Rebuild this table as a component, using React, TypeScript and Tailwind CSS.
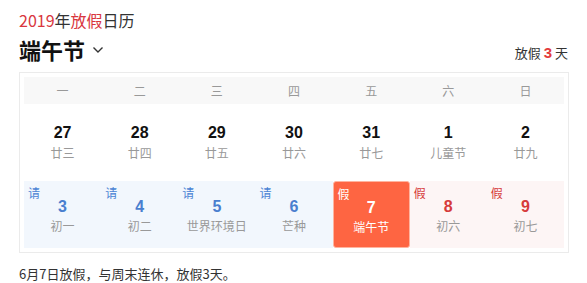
import React from "react";

const font = { fontFamily: '"Noto Sans CJK SC", "Liberation Sans", sans-serif' };

const weekdays = ["一", "二", "三", "四", "五", "六", "日"];
const row1 = [
  ["27", "廿三"],
  ["28", "廿四"],
  ["29", "廿五"],
  ["30", "廿六"],
  ["31", "廿七"],
  ["1", "儿童节"],
  ["2", "廿九"],
];

type Cell = { d: string; l: string; tag: string; kind: "work" | "main" | "rest" };
const row2: Cell[] = [
  { d: "3", l: "初一", tag: "请", kind: "work" },
  { d: "4", l: "初二", tag: "请", kind: "work" },
  { d: "5", l: "世界环境日", tag: "请", kind: "work" },
  { d: "6", l: "芒种", tag: "请", kind: "work" },
  { d: "7", l: "端午节", tag: "假", kind: "main" },
  { d: "8", l: "初六", tag: "假", kind: "rest" },
  { d: "9", l: "初七", tag: "假", kind: "rest" },
];

export default function App() {
  return (
    <div className="w-[587px] h-[283px] bg-white px-[19px] pt-[10px] overflow-hidden" style={font}>
      <div className="text-[16px] leading-[20px] text-[#333]">
        <span className="text-[#d9363e]">2019</span>年<span className="text-[#d9363e]">放假</span>日历
      </div>
      <div className="flex items-end justify-between h-[32px] mt-[2px]">
        <div className="flex items-center">
          <span className="text-[22px] leading-[30px] font-bold text-[#111]">端午节</span>
          <svg width="12" height="8" viewBox="0 0 12 8" className="ml-[7px] mt-[2px]">
            <path d="M1.5 1.5 L6 6 L10.5 1.5" fill="none" stroke="#333" strokeWidth="1.4" />
          </svg>
        </div>
        <div className="text-[13px] leading-[20px] text-[#333] pb-[1px]">
          放假 <span className="text-[#e33b3b] font-bold text-[15px]" style={{ fontFamily: '"Liberation Sans", sans-serif' }}>3</span> 天
        </div>
      </div>
      <div className="mt-[8px] border border-[#ebebeb] p-[4px] w-[550px]">
        <div className="grid grid-cols-7 h-[27px] bg-[#f8f8f8] text-[12px] text-[#999]">
          {weekdays.map((w) => (
            <div key={w} className="flex items-center justify-center">{w}</div>
          ))}
        </div>
        <div className="grid grid-cols-7 h-[76px]">
          {row1.map(([d, l]) => (
            <div key={d} className="flex flex-col items-center pt-[20px]">
              <span className="text-[16px] leading-[18px] font-bold text-[#111]" style={{ fontFamily: '"Liberation Sans", sans-serif' }}>{d}</span>
              <span className="text-[12px] leading-[16px] mt-[3px] text-[#999]">{l}</span>
            </div>
          ))}
        </div>
        <div className="grid grid-cols-7 h-[67px] mt-[1px]">
          {row2.map((c) => {
            const bg =
              c.kind === "work"
                ? "bg-[#f2f7fd]"
                : c.kind === "main"
                ? "bg-[#fe6542] border border-[#ffb49f] rounded-[3px]"
                : "bg-[#fdf5f5]";
            const tagColor = c.kind === "work" ? "text-[#4a83d4]" : c.kind === "main" ? "text-white" : "text-[#d63b3b]";
            const numColor = c.kind === "work" ? "text-[#4a7fcf]" : c.kind === "main" ? "text-white" : "text-[#d63b3b]";
            const lunColor = c.kind === "main" ? "text-white" : "text-[#999]";
            return (
              <div key={c.d} className={`relative flex flex-col items-center pt-[17px] ${bg}`}>
                <span className={`absolute left-[4px] top-[5px] text-[12px] leading-[14px] ${tagColor}`}>{c.tag}</span>
                <span className={`text-[16px] leading-[18px] font-bold ${numColor}`} style={{ fontFamily: '"Liberation Sans", sans-serif' }}>{c.d}</span>
                <span className={`text-[12px] leading-[16px] mt-[2px] ${lunColor}`}>{c.l}</span>
              </div>
            );
          })}
        </div>
      </div>
      <div className="mt-[12px] text-[13px] leading-[18px] text-[#333]">6月7日放假，与周末连休，放假3天。</div>
    </div>
  );
}
